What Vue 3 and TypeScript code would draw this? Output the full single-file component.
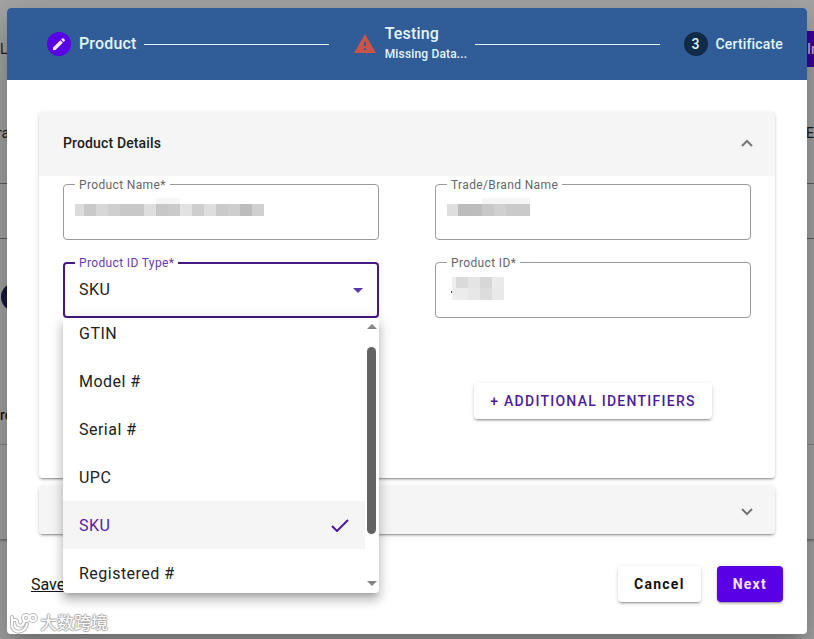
<script setup lang="ts">
import { onMounted, ref } from 'vue'

interface Cell {
  x: number
  y: number
  w: number
  h: number
  c: string
}

const options: string[] = ['GTIN', 'Model #', 'Serial #', 'UPC', 'SKU', 'Registered #']
const selected = ref('SKU')
const detailsOpen = ref(true)
const menuOpen = ref(true)
const list = ref<HTMLUListElement | null>(null)

function row(shades: string[], first: number, y: number, h: number): Cell[] {
  return shades.map((c, i) => ({
    x: i === 0 ? 0 : first + (i - 1) * 12,
    y,
    w: i === 0 ? first : 12,
    h,
    c,
  }))
}

const nameMask: Cell[] = [
  ...row(['#dcdcdc', '#c9c9c9', '#d7d7d7', '#cfcfcf', '#c8c8c8', '#c8c8c8', '#dedede', '#c7c7c7', '#cacaca', '#e2e2e2', '#cecece', '#dedede', '#cacaca', '#cecece', '#bcbcbc', '#d0d0d0'], 9, 8, 12),
  { x: 81, y: 2, w: 24, h: 6, c: '#f5f5f5' },
]
const brandMask: Cell[] = [
  ...row(['#dedede', '#bcbcbc', '#bdbdbd', '#c8c8c8', '#d0d0d0', '#cacaca', '#cacaca'], 11, 8, 12),
  { x: 35, y: 2, w: 48, h: 6, c: '#f5f5f5' },
]
const idMask: Cell[] = [
  ...row(['#eeeeee', '#dadada', '#e4e4e4', '#d7d7d7', '#eaeaea'], 4, 3, 11),
  ...row(['#ededed', '#ececec', '#e7e7e7', '#dcdcdc', '#e9e9e9'], 4, 14, 12),
  { x: -1, y: 17, w: 1, h: 2, c: '#444444' },
]

function choose(option: string): void {
  selected.value = option
  menuOpen.value = false
}

onMounted(() => {
  if (list.value) list.value.scrollTop = 17
})
</script>

<template>
  <div class="screen">
    <div class="page" aria-hidden="true">
      <div class="page-bar"><span>L</span><span class="page-button">In</span></div>
      <div class="page-row"><span>ra</span><span class="page-end">E</span></div>
      <div class="page-filter"></div>
      <div class="page-dot"></div>
      <div class="page-heading">ro</div>
      <div class="page-card"></div>
    </div>

    <div class="overlay">
      <main class="dialog" role="dialog" aria-label="Product">
        <header class="stepper">
          <div class="step">
            <span class="badge badge-active">
              <svg viewBox="0 0 24 24" width="16" height="16"><path fill="#fbe9ff" d="M3 17.25V21h3.75L17.81 9.94l-3.75-3.75L3 17.25zM20.71 7.04a1 1 0 0 0 0-1.41l-2.34-2.34a1 1 0 0 0-1.41 0l-1.83 1.83 3.75 3.75 1.83-1.83z" /></svg>
            </span>
            <span class="step-name">Product</span>
          </div>
          <span class="line"></span>
          <div class="step">
            <svg class="warn" viewBox="0 0 24 24" width="24" height="24"><path fill="#cb5449" d="M1 21h22L12 2 1 21zm12-3h-2v-2h2v2zm0-4h-2v-4h2v4z" /></svg>
            <span class="step-text">
              <span class="step-name">Testing</span>
              <span class="step-note">Missing Data...</span>
            </span>
          </div>
          <span class="line"></span>
          <div class="step">
            <span class="badge">3</span>
            <span class="step-name step-small">Certificate</span>
          </div>
        </header>

        <div class="content">
          <section class="panel">
            <button class="panel-head panel-head-open" type="button" :aria-expanded="detailsOpen" @click="detailsOpen = !detailsOpen">
              <span>Product Details</span>
              <svg viewBox="0 0 12 8" width="12" height="8"><path d="M1 7l5-5 5 5" fill="none" stroke="#757575" stroke-width="2" /></svg>
            </button>
            <div v-if="detailsOpen" class="panel-body">
              <div class="fields">
                <div class="field">
                  <label for="name">Product Name*</label>
                  <input id="name" type="text" />
                  <svg class="mask" width="200" height="28"><rect v-for="(m, i) in nameMask" :key="i" :x="m.x" :y="m.y" :width="m.w" :height="m.h" :fill="m.c" /></svg>
                </div>
                <div class="field">
                  <label for="brand">Trade/Brand Name</label>
                  <input id="brand" type="text" />
                  <svg class="mask" width="200" height="28"><rect v-for="(m, i) in brandMask" :key="i" :x="m.x" :y="m.y" :width="m.w" :height="m.h" :fill="m.c" /></svg>
                </div>
                <div class="field field-focus">
                  <label for="type">Product ID Type*</label>
                  <select id="type" v-model="selected">
                    <option v-for="o in options" :key="o" :value="o">{{ o }}</option>
                  </select>
                  <svg class="caret" viewBox="0 0 10 5" width="10" height="5"><path d="M0 0h10L5 5z" fill="#5b35a8" /></svg>
                  <div v-if="menuOpen" class="menu">
                    <ul ref="list" role="listbox" aria-label="Product ID Type">
                      <li v-for="o in options" :key="o" role="option" :aria-selected="o === selected" :class="{ chosen: o === selected }" @click="choose(o)">
                        <span>{{ o }}</span>
                        <svg v-if="o === selected" viewBox="0 0 18 14" width="18" height="14"><path d="M1 8l5 5L17 2" fill="none" stroke="#4a1a9e" stroke-width="2" /></svg>
                      </li>
                    </ul>
                    <div class="scroll">
                      <svg viewBox="0 0 10 5" width="10" height="5"><path d="M0 5h10L5 0z" fill="#858585" /></svg>
                      <span class="thumb"></span>
                      <svg viewBox="0 0 10 5" width="10" height="5"><path d="M0 0h10L5 5z" fill="#858585" /></svg>
                    </div>
                  </div>
                </div>
                <div class="field">
                  <label for="pid">Product ID*</label>
                  <input id="pid" type="text" />
                  <svg class="mask" width="200" height="28"><rect v-for="(m, i) in idMask" :key="i" :x="m.x + 5" :y="m.y" :width="m.w" :height="m.h" :fill="m.c" /></svg>
                </div>
                <button class="btn btn-add" type="button">+ ADDITIONAL IDENTIFIERS</button>
              </div>
            </div>
          </section>

          <section class="panel">
            <button class="panel-head" type="button" aria-label="Next section" aria-expanded="false">
              <span></span>
              <svg viewBox="0 0 12 8" width="12" height="8"><path d="M1 1l5 5 5-5" fill="none" stroke="#757575" stroke-width="2" /></svg>
            </button>
          </section>
        </div>

        <footer class="actions">
          <a href="#">Save</a>
          <button class="btn" type="button">Cancel</button>
          <button class="btn btn-next" type="button">Next</button>
        </footer>
      </main>
    </div>

    <div class="watermark">
      <svg viewBox="0 0 30 22" width="30" height="22" fill="none" stroke-linecap="round">
        <g stroke="#b9b9b9" stroke-width="4"><path d="M4 5v8c0 9 13 9 15-1M4 8h4M9 9c0 6 6 6 7 1" /><circle cx="18" cy="6" r="3" /><circle cx="25" cy="6" r="3" /></g>
        <g stroke="#ffffff" stroke-width="2"><path d="M4 5v8c0 9 13 9 15-1M4 8h4M9 9c0 6 6 6 7 1" /><circle cx="18" cy="6" r="3" /><circle cx="25" cy="6" r="3" /></g>
      </svg>
      <span>大数跨境</span>
    </div>
  </div>
</template>

<style>
body {
  margin: 0;
  background: #a6a6a6;
}
</style>

<style scoped>
.screen {
  --track-title: 0.01em;
  --track-body: 0.03em;
  --track-button: 0.09em;
  position: relative;
  min-height: 100vh;
  overflow: hidden;
  font-family: Roboto, 'Noto Sans CJK SC', sans-serif;
  font-size: 16px;
  color: #212121;
}
.screen *,
.screen *::before {
  box-sizing: border-box;
}
svg {
  display: block;
  flex: none;
}
button,
input,
select {
  font: inherit;
  color: inherit;
}

.page {
  position: absolute;
  inset: 0;
  font-size: 14px;
  color: #1b1b1b;
}
.page-bar {
  display: flex;
  justify-content: space-between;
  align-items: center;
  height: 36px;
  margin-top: 31px;
}
.page-button {
  width: 24px;
  height: 36px;
  padding-left: 17px;
  overflow: hidden;
  background: #3d0099;
  color: #c9a9dd;
  font-weight: 500;
  line-height: 36px;
}
.page-row {
  display: flex;
  justify-content: space-between;
  margin: 56px 0 40px;
  line-height: 20px;
}
.page-row span:first-child {
  margin-left: -3px;
}
.page-end {
  width: 8px;
}
.page-filter {
  height: 56px;
  border: 1px solid #606060;
  border-width: 1px 0;
}
.page-dot {
  width: 28px;
  height: 28px;
  margin: 44px 0 0 1px;
  border-radius: 50%;
  background: #1b1840;
}
.page-heading {
  margin-top: 94px;
  height: 40px;
  border-bottom: 1px solid #858585;
  font-weight: 500;
  line-height: 20px;
}
.page-card {
  height: 94px;
  box-shadow: 0 2px 2px rgba(0, 0, 0, 0.3);
}

.overlay {
  position: relative;
  padding: 8px 7px 5px;
}
.dialog {
  border-radius: 4px;
  background: #fff;
  box-shadow: 0 11px 15px -7px rgba(0, 0, 0, 0.2), 0 24px 38px 3px rgba(0, 0, 0, 0.14), 0 9px 46px 8px rgba(0, 0, 0, 0.12);
}

.stepper {
  display: flex;
  align-items: center;
  height: 72px;
  padding: 0 24px 0 40px;
  border-radius: 4px 4px 0 0;
  background: #305c97;
  color: #e3f6fd;
  letter-spacing: var(--track-title);
}
.step {
  display: flex;
  align-items: center;
  gap: 8px;
  font-weight: 500;
}
.step-text {
  display: flex;
  flex-direction: column;
}
.step-name {
  line-height: 20px;
}
.step-small {
  font-size: 14px;
}
.step-note {
  font-size: 12px;
  line-height: 20px;
}
.badge {
  display: grid;
  place-items: center;
  width: 24px;
  height: 24px;
  border-radius: 50%;
  background: #102a47;
  font-size: 14px;
}
.badge-active {
  background: #5a00e6;
}
.line {
  flex: 1;
  height: 1px;
  margin: 0 24px 0 8px;
  background: #e3f6ef;
}

.content {
  display: flex;
  flex-direction: column;
  gap: 8px;
  padding: 32px;
}
.panel {
  border-radius: 4px;
  box-shadow: 0 3px 1px -2px rgba(0, 0, 0, 0.2), 0 2px 2px rgba(0, 0, 0, 0.14), 0 1px 5px rgba(0, 0, 0, 0.12);
}
.panel-head {
  display: flex;
  justify-content: space-between;
  align-items: center;
  width: 100%;
  height: 48px;
  padding: 4px 22px 0 24px;
  border: 0;
  border-radius: 4px;
  background: #f5f5f5;
  font-size: 14px;
  font-weight: 500;
  letter-spacing: var(--track-title);
}
.panel-head-open {
  height: 64px;
  padding: 0 22px 3px 24px;
  border-radius: 4px 4px 0 0;
}
.panel-body {
  padding: 8px 24px 59px;
}
.fields {
  display: grid;
  grid-template-columns: 1fr 1fr;
  gap: 22px 56px;
}
.field {
  position: relative;
}
.field label {
  position: absolute;
  top: -7px;
  left: 12px;
  padding: 0 4px;
  background: #fff;
  color: #666;
  font-size: 12px;
  line-height: 16px;
  letter-spacing: var(--track-body);
}
.field input,
.field select {
  display: block;
  width: 100%;
  height: 56px;
  margin: 0;
  padding: 0 15px;
  border: 1px solid #9a9a9a;
  border-radius: 4px;
  outline: 0;
  appearance: none;
  background: #fff;
  letter-spacing: var(--track-body);
}
.field-focus select {
  padding: 0 14px 2px;
  border: 2px solid #46187f;
}
.field-focus label {
  color: #6a3aa8;
}
.mask {
  position: absolute;
  top: 12px;
  left: 12px;
  pointer-events: none;
}
.caret {
  position: absolute;
  top: 26px;
  right: 16px;
  pointer-events: none;
}

.menu {
  position: absolute;
  top: 100%;
  left: 0;
  z-index: 1;
  display: flex;
  width: 100%;
  height: 275px;
  border-radius: 0 0 4px 4px;
  background: #fff;
  box-shadow: 0 5px 5px -3px rgba(0, 0, 0, 0.2), 0 8px 10px 1px rgba(0, 0, 0, 0.14), 0 3px 14px 2px rgba(0, 0, 0, 0.12);
}
.menu ul {
  flex: 1;
  margin: 0;
  padding: 8px 0;
  overflow: hidden;
  list-style: none;
  letter-spacing: var(--track-body);
}
.menu li {
  display: flex;
  justify-content: space-between;
  align-items: center;
  height: 48px;
  padding: 0 16px;
  cursor: pointer;
}
.menu .chosen {
  background: #f5f5f5;
  color: #5323a5;
}
.scroll {
  display: flex;
  flex-direction: column;
  align-items: center;
  width: 14px;
  padding: 6px 3px 7px 2px;
}
.thumb {
  width: 9px;
  height: 187px;
  margin: 18px 0 auto;
  border-radius: 5px;
  background: #636363;
}

.btn {
  height: 36px;
  padding: 0 16px;
  border: 0;
  border-radius: 4px;
  background: #fff;
  color: #111;
  font-size: 14px;
  font-weight: 500;
  letter-spacing: var(--track-button);
  box-shadow: 0 3px 1px -2px rgba(0, 0, 0, 0.2), 0 2px 2px rgba(0, 0, 0, 0.14), 0 1px 5px rgba(0, 0, 0, 0.12);
}
.btn-add {
  grid-column: 2;
  justify-self: center;
  margin-top: 43px;
  color: #4b1d96;
}
.btn-next {
  background: #5a00e6;
  color: #fbe0ff;
}
.actions {
  display: flex;
  align-items: center;
  gap: 16px;
  padding: 0 24px 32px;
}
.actions .btn {
  font-weight: 700;
}
.actions a {
  margin-right: auto;
  color: #111;
}

.watermark {
  position: absolute;
  left: 8px;
  bottom: 4px;
  display: flex;
  align-items: center;
  gap: 2px;
  color: #fff;
  font-size: 17px;
  line-height: 24px;
  text-shadow: 1px 0 1px #aaa, -1px 0 1px #aaa, 0 1px 1px #aaa, 0 -1px 1px #aaa;
}
</style>
